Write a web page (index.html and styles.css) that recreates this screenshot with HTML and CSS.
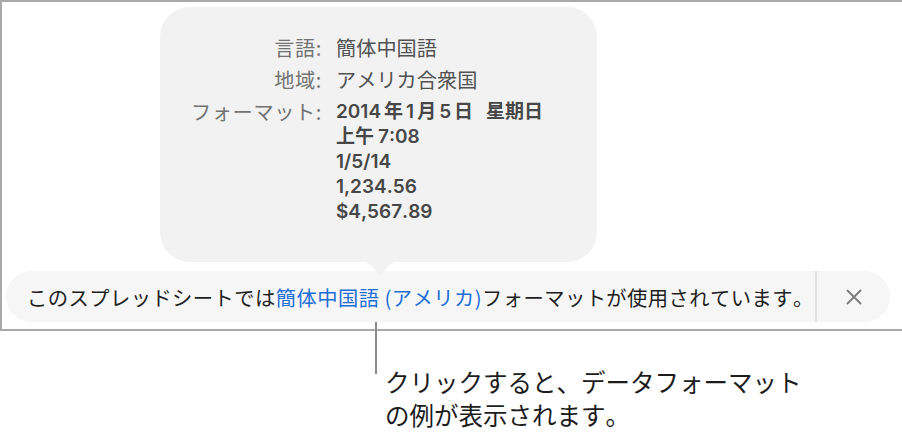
FILE: index.html
```html
<!DOCTYPE html>
<html lang="ja">
<head>
<meta charset="utf-8">
<link rel="stylesheet" href="styles.css">
</head>
<body>
<div class="frame">
  <div class="popover">
    <div class="grid">
      <div class="label">言語:</div>
      <div class="value">簡体中国語</div>
      <div class="label">地域:</div>
      <div class="value">アメリカ合衆国</div>
      <div class="label">フォーマット:</div>
      <div class="value formats">
        <div>2014<span class="cj">年</span>1<span class="cj">月</span>5<span class="cj">日</span> <span class="wk">星期日</span></div>
        <div><span class="cjr">上午</span>7:08</div>
        <div>1/5/14</div>
        <div>1,234.56</div>
        <div>$4,567.89</div>
      </div>
    </div>
    <svg class="arrow" width="40" height="17" viewBox="0 0 40 17"><path d="M0 0 C7 0 10 3 15 9 L17.5 12.5 Q20 15.5 22.5 12.5 L25 9 C30 3 33 0 40 0 Z" fill="#f2f2f2"/></svg>
  </div>
  <div class="banner">
    <div class="msg">このスプレッドシートでは<span class="link">簡体中国語 (アメリカ)</span>フォーマットが使用されています。</div>
    <div class="divider"></div>
    <div class="close">
      <svg width="16" height="16" viewBox="0 0 16 16"><path d="M1.5 1.5 L14.5 14.5 M14.5 1.5 L1.5 14.5" stroke="#7b7b7b" stroke-width="1.8" stroke-linecap="round"/></svg>
    </div>
  </div>
</div>
<div class="callout">
  <div class="callout-text">クリックすると、データフォーマット<br>の例が表示されます。</div>
</div>
</body>
</html>
```
FILE: styles.css
```css
html, body {
  margin: 0;
  padding: 0;
  background: #ffffff;
}
body {
  width: 902px;
  height: 436px;
  overflow: hidden;
  font-family: "Noto Sans CJK JP", "Noto Sans", sans-serif;
  font-kerning: none;
}
.frame {
  position: relative;
  box-sizing: border-box;
  width: 902px;
  height: 331px;
  border-top: 2px solid #a9a9a9;
  border-left: 2px solid #a9a9a9;
  border-bottom: 2px solid #a9a9a9;
  padding-top: 269px;
}
.popover {
  position: absolute;
  left: 158px;
  top: 5px;
  width: 437px;
  height: 255px;
  box-sizing: border-box;
  background: #f2f2f2;
  border-radius: 30px;
  padding-top: 28px;
  z-index: 2;
}
.grid {
  display: grid;
  grid-template-columns: 162px auto;
  column-gap: 14px;
  row-gap: 7px;
  font-size: 20.2px;
  line-height: 25px;
}
.label {
  text-align: right;
  color: #727272;
  letter-spacing: 0.6px;
}
.value {
  color: #525252;
}
.formats {
  font-family: "Inter", "Noto Sans CJK JP", sans-serif;
  font-weight: 600;
  font-size: 19px;
  color: #474747;
}
.cj {
  margin: 0 3px;
}
.wk {
  margin-left: 5px;
}
.cjr {
  margin-right: 4px;
}
.arrow {
  position: absolute;
  left: 200px;
  bottom: -16px;
}
.banner {
  display: flex;
  align-items: stretch;
  width: 884px;
  height: 51px;
  margin-left: 4px;
  background: #f6f6f6;
  border-radius: 26px;
}
.msg {
  flex: 1;
  display: flex;
  align-items: center;
  padding-left: 21px;
  font-size: 20.3px;
  letter-spacing: 0.45px;
  color: #1e1e1e;
  white-space: nowrap;
}
.link {
  color: #1d6fd6;
}
.divider {
  width: 2px;
  background: #e0e0e0;
}
.close {
  width: 73px;
  display: flex;
  align-items: center;
  justify-content: center;
}
.callout {
  position: relative;
  padding-left: 385px;
  padding-top: 34px;
}
.callout::before {
  content: "";
  position: absolute;
  left: 375px;
  top: -9px;
  width: 2px;
  height: 52px;
  background: #8a8a8a;
}
.callout-text {
  font-size: 24.5px;
  line-height: 33px;
  color: #1c1c1c;
}
```
